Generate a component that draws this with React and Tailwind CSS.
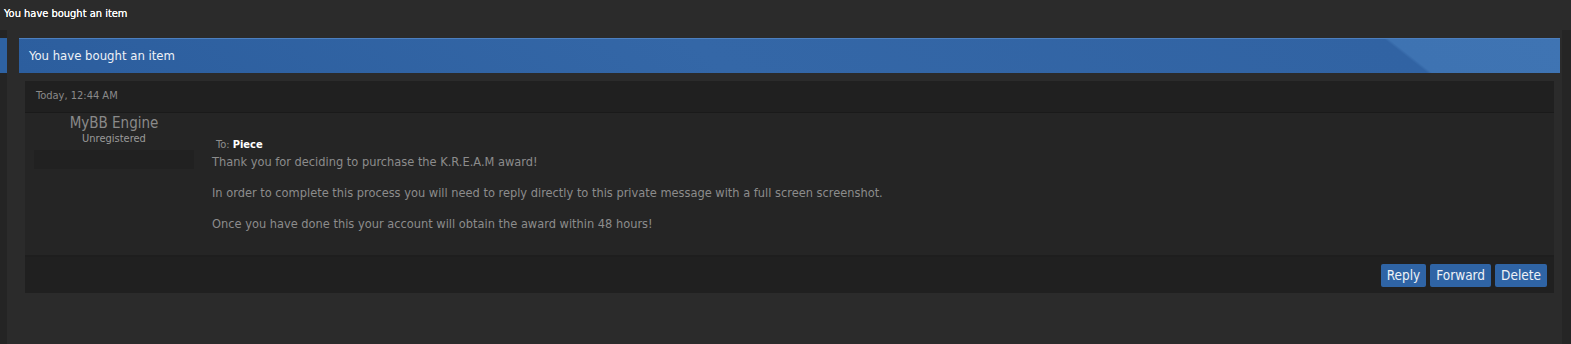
import React from 'react';

const font = { fontFamily: '"DejaVu Sans Condensed", "DejaVu Sans", sans-serif' };

const paragraphs = [
  'Thank you for deciding to purchase the K.R.E.A.M award!',
  'In order to complete this process you will need to reply directly to this private message with a full screen screenshot.',
  'Once you have done this your account will obtain the award within 48 hours!',
];

const App = () => {
  return (
    <div className="h-[344px] w-full overflow-hidden bg-[#2b2b2b] font-['DejaVu_Sans_Condensed',sans-serif]">
      {/* page title */}
      <div className="h-[30px] pl-[4px] pt-[6px] text-[11px] text-white [text-shadow:0_0_0.4px_#fff]">
        You have bought an item
      </div>

      <div className="flex h-[314px]">
        {/* left sidebar strip */}
        <div className="w-[7px] bg-[#242424] pt-[8px]">
          <div className="h-[35px] bg-[#2e62a2]" />
        </div>

        <div className="flex-1 pl-[12px] pr-[2px] pt-[8px]">
          {/* blue thead */}
          <div className="flex h-[35px] items-center border-t border-[#4c7fbf] bg-[linear-gradient(38deg,#2c5e9e_0%,#3467a7_45%,#3163a3_88.9%,#3e73b2_89.2%,#3f74b3_100%)] pl-[10px] text-[13px] text-[#eef2f7]">
            You have bought an item
          </div>

          {/* message box */}
          <div className="mx-[6px] mt-[8px] bg-[#252525]">
            <div className="flex h-[32px] items-center border-b border-[#1a1a1a] bg-[#202020] pl-[11px] text-[11px] text-[#8a8a8a]">
              Today, 12:44 AM
            </div>

            <div className="flex h-[144px] border-b-2 border-[#1e1e1e]">
              <div className="w-[178px] pl-[9px] pt-[1px]">
                <div className="w-[160px] text-center">
                  <div className="text-[15px] leading-[18px] text-[#8a8a8a]">MyBB Engine</div>
                  <div className="text-[11px] leading-[13px] text-[#9a9a9a]">Unregistered</div>
                  <div className="mt-[5px] h-[19px] bg-[#212121]" />
                </div>
              </div>

              <div className="flex-1 pl-[9px] pt-[25px]">
                <div className="mb-[2px] pl-[4px] text-[11px] leading-[14px] text-[#8f8f8f]">
                  To: <span className="font-bold text-white">Piece</span>
                </div>
                {paragraphs.map((text, index) => (
                  <p
                    key={index}
                    className="mb-[15px] text-[12.7px] leading-[16px] text-[#8c8c8c]"
                  >
                    {text}
                  </p>
                ))}
              </div>
            </div>

            <div className="flex h-[36px] items-center justify-end gap-[4px] bg-[#202020] pr-[7px]">
              {['Reply', 'Forward', 'Delete'].map((label) => (
                <button
                  key={label}
                  className="h-[23px] rounded-[2px] bg-[#2f64a5] px-[6px] text-[13.5px] text-[#eef2f7]"
                  style={font}
                >
                  {label}
                </button>
              ))}
            </div>
          </div>
        </div>

        {/* right sidebar strip */}
        <div className="w-[9px] bg-[#252525]" />
      </div>
    </div>
  );
};

export default App;
